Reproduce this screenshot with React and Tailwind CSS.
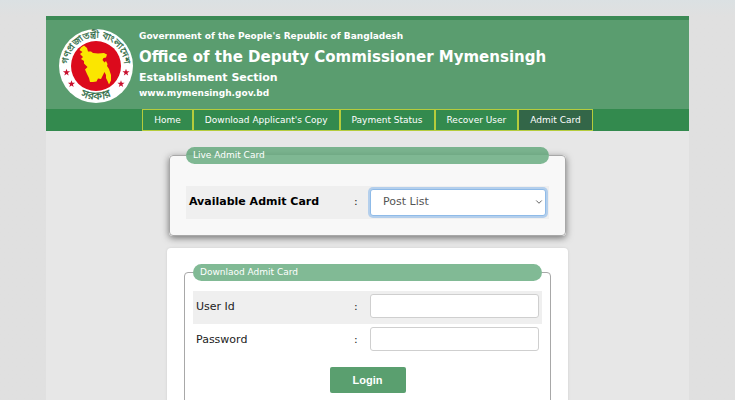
import { ChevronDown } from 'lucide-react';

const NAV = [
  { label: 'Home' },
  { label: "Download Applicant's Copy" },
  { label: 'Payment Status' },
  { label: 'Recover User' },
  { label: 'Admit Card', active: true },
];

const STARS = [
  [66.5, 72.5],
  [71.5, 84],
  [126, 72.5],
  [121, 84],
];

function Star({ x, y }) {
  return (
    <path
      transform={`translate(${x} ${y}) scale(1.15)`}
      fill="#c8102e"
      d="M0-3.2 .8-1 3.1-1 1.2.4 1.9 2.6 0 1.3-1.9 2.6-1.2.4-3.1-1-.8-1Z"
    />
  );
}

function Emblem() {
  return (
    <svg viewBox="58 28 76 76" className="size-19 shrink-0" role="img" aria-label="Government Seal of Bangladesh">
      <defs>
        <path id="arc-top" d="M69.400 74.500A28 28 0 1 1 122.600 74.500" />
        <path id="arc-bottom" d="M75 92.500A34.500 34.500 0 0 0 117 92.500" />
      </defs>
      <circle cx="96" cy="66" r="37" fill="#fff" />
      <circle cx="96" cy="66" r="25" fill="#dc0a1c" />
      <path
        fill="#fbe600"
        d="M81 47.500 84 45.500 87 48 88 51.500 91 51.500 93 53 98 53.500 104 53 107 54.500 106 57.500 103.500 58 102.500 60 104.500 62.500 106 61 107.500 64 107 66 109 69 111 75 111 80.500 109 84.500 107.500 81 106 78 106 75 104.500 72 102.500 76 101 79 98 78.500 96.500 81.500 93 82 90 82 89 78 87 74 85 69.500 87.500 67 84 63.500 84 61 81 59 83 57 80 54 82.500 52 79.500 50Z"
      />
      {STARS.map(([x, y]) => (
        <Star key={`${x}-${y}`} x={x} y={y} />
      ))}
      <g fill="#2f6b45" stroke="#2f6b45" strokeWidth="0.200" fontSize="9.500" textAnchor="middle" className="font-['Noto_Sans_Bengali','Noto_Sans',sans-serif]">
        <text>
          <textPath href="#arc-top" startOffset="50%">গণপ্রজাতন্ত্রী বাংলাদেশ</textPath>
        </text>
        <text fontSize="11">
          <textPath href="#arc-bottom" startOffset="50%">সরকার</textPath>
        </text>
      </g>
    </svg>
  );
}

function Legend({ children }) {
  return (
    <legend className="h-[17px] w-full rounded-full bg-[#4c9c68]/70 px-[7px] text-[9px] leading-[17px] text-white">
      {children}
    </legend>
  );
}

function LoginRow({ id, label, type, shaded }) {
  return (
    <div className={`flex h-[33px] items-center px-[3px] ${shaded ? 'bg-[#efefef]' : ''}`}>
      <label htmlFor={id} className="flex-1 text-[11px]">
        {label}
      </label>
      <span className="w-4 text-[11px]">:</span>
      <input
        id={id}
        type={type}
        className="mb-1 h-6 w-[169px] rounded-[3px] border border-[#cfcfcf] bg-white px-3 text-[11px] outline-none"
      />
    </div>
  );
}

export default function App() {
  return (
    <div className="h-screen overflow-hidden bg-[#e0e0e0] bg-linear-to-b from-[#dbe1e3] to-[#e0e0e0] to-[16px] px-[46px] pt-4 font-['DejaVu_Sans',Verdana,sans-serif] text-[#222]">
      <div className="min-h-screen bg-[#e7e7e7]">
        <header>
          <div className="flex h-[93px] items-start gap-[5px] border-t-4 border-[#3c8a55] bg-[#5a9d6f] pt-2 pl-3 text-white">
            <Emblem />
            <div className="font-bold">
              <p className="text-[9px] leading-4">Government of the People's Republic of Bangladesh</p>
              <h1 className="text-[15px] leading-[27px]">Office of the Deputy Commissioner Mymensingh</h1>
              <p className="text-[11px] leading-[13px]">Establishment Section</p>
              <p className="text-[9px] leading-[18px]">www.mymensingh.gov.bd</p>
            </div>
          </div>
          <nav className="flex h-[22px] justify-center bg-[#338a4e] text-[9px] leading-5 text-white">
            {NAV.map(({ label, active }) => (
              <a
                key={label}
                href="#"
                className={`border border-[#b5cc3c] px-[11px] ${active ? 'bg-[#336648]' : ''}`}
              >
                {label}
              </a>
            ))}
          </nav>
        </header>

        <main className="mx-auto w-[401px] pt-4">
          <fieldset className="mx-[2px] rounded-[4px] border border-[#a8a8a8] bg-[#f8f8f8] px-4 pb-4 shadow-[0_2px_7px_rgba(0,0,0,0.5)]">
            <Legend>Live Admit Card</Legend>
            <div className="mt-[22px] flex h-[33px] items-center bg-[#efefef] pl-[3px]">
              <label htmlFor="post" className="flex-1 text-[11px] font-bold text-black">
                Available Admit Card
              </label>
              <span className="w-4 text-[11px]">:</span>
              <div className="relative mr-[3px]">
                <select
                  id="post"
                  className="block h-[27px] w-[176px] appearance-none rounded-[3px] border border-[#8fbbe8] bg-white px-3 text-[11px] text-[#555] ring-2 ring-[#b4cfec] outline-none"
                >
                  <option>Post List</option>
                </select>
                <ChevronDown className="pointer-events-none absolute top-2 right-[2px] size-[10px] text-[#444]" strokeWidth={2} />
              </div>
            </div>
          </fieldset>

          <section className="mt-3 rounded-[4px] bg-white px-[17px] pt-4 pb-4 shadow-[0_0_3px_rgba(0,0,0,0.1)]">
            <fieldset className="rounded-[4px] border border-[#a8a8a8] px-2 pb-6">
              <Legend>Downlaod Admit Card</Legend>
              <form className="mt-[10px]">
                <LoginRow id="user" label="User Id" type="text" shaded />
                <LoginRow id="password" label="Password" type="password" />
                <button
                  type="button"
                  className="mx-auto mt-[10px] block h-[26px] w-[76px] rounded-[2px] bg-[#5a9f6f] font-['Liberation_Sans',Arial,sans-serif] text-[11px] font-bold text-white"
                >
                  Login
                </button>
              </form>
            </fieldset>
          </section>
        </main>
      </div>
    </div>
  );
}
